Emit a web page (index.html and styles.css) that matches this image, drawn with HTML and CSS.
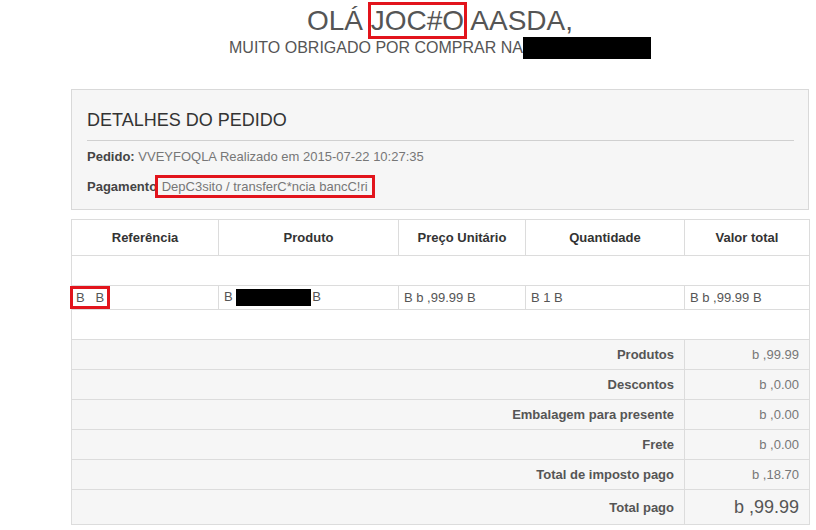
FILE: index.html
```html
<!DOCTYPE html>
<html lang="pt">
<head>
  <meta charset="UTF-8">
  <title>Pedido</title>
  <link rel="stylesheet" href="styles.css">
</head>
<body>
  <div class="page">
    <!-- Greeting -->
    <h1 class="hello">OLÁ <span class="mark">JOC#O</span> AASDA,</h1>
    <p class="thanks">MUITO OBRIGADO POR COMPRAR NA<span class="redact shop"></span></p>

    <!-- Order details -->
    <div class="details">
      <h3>DETALHES DO PEDIDO</h3>
      <p class="first"><b>Pedido:</b> VVEYFOQLA Realizado em 2015-07-22 10:27:35</p>
      <p><b>Pagamento</b> <span class="mark pay">DepC3sito / transferC*ncia bancC!ri</span></p>
    </div>

    <!-- Products -->
    <table class="order">
      <colgroup>
        <col style="width: 147px">
        <col style="width: 180px">
        <col style="width: 127px">
        <col style="width: 159px">
        <col style="width: 125px">
      </colgroup>
      <tr class="head">
        <th>Referência</th>
        <th>Produto</th>
        <th>Preço Unitário</th>
        <th>Quantidade</th>
        <th>Valor total</th>
      </tr>
      <tr class="blank"><td colspan="5"></td></tr>
      <tr class="item">
        <td><span class="mark ref">B&nbsp;&nbsp;&nbsp;B</span></td>
        <td>B <span class="redact prod"></span>B</td>
        <td>B b ,99.99 B</td>
        <td>B 1 B</td>
        <td>B b ,99.99 B</td>
      </tr>
      <tr class="blank"><td colspan="5"></td></tr>
      <tr class="sum"><td colspan="4">Produtos</td><td>b ,99.99</td></tr>
      <tr class="sum"><td colspan="4">Descontos</td><td>b ,0.00</td></tr>
      <tr class="sum"><td colspan="4">Embalagem para presente</td><td>b ,0.00</td></tr>
      <tr class="sum"><td colspan="4">Frete</td><td>b ,0.00</td></tr>
      <tr class="sum"><td colspan="4">Total de imposto pago</td><td>b ,18.70</td></tr>
      <tr class="sum total"><td colspan="4">Total pago</td><td>b ,99.99</td></tr>
    </table>
  </div>
</body>
</html>
```

FILE: styles.css
```css
body {
  margin: 0;
  background: #fff;
  font-family: "Liberation Sans", Arial, sans-serif;
  color: #555;
}

.page {
  width: 738px;
  margin-left: 71px;
}

.hello {
  margin: 5px 0 0;
  font-size: 28px;
  font-weight: normal;
  line-height: 31px;
  text-align: center;
  color: #555;
}

.thanks {
  margin: 1px 0 30px;
  font-size: 16px;
  line-height: 22px;
  text-align: center;
  color: #555;
}

.mark {
  outline: 3px solid #e2141c;
}

.redact {
  display: inline-block;
  background: #000;
}

.shop {
  width: 128px;
  height: 22px;
  vertical-align: bottom;
}

.details {
  background: #f6f6f6;
  border: 1px solid #d9d9d9;
  padding: 18px 14px 12px 15px;
}

.details h3 {
  margin: 0;
  font-size: 18px;
  font-weight: normal;
  line-height: 24px;
  color: #333;
  padding-bottom: 8px;
  border-bottom: 1px solid #d0d0d0;
}

.details p {
  margin: 10px 0 0;
  font-size: 13px;
  line-height: 20px;
  color: #777;
}

.details p.first {
  margin-top: 6px;
}

.details b {
  color: #444;
}

.pay {
  padding: 1px 4px;
  margin-left: -3px;
}

.order {
  width: 738px;
  margin-top: 9px;
  border-collapse: collapse;
  table-layout: fixed;
  font-size: 13px;
  border: 1px solid #dcdcdc;
}

.order th,
.order td {
  border: 1px solid #dcdcdc;
  padding: 0 6px;
}

.head th {
  height: 35px;
  font-weight: bold;
  color: #333;
  text-align: center;
}

.blank td {
  height: 29px;
  padding: 0;
}

.item td {
  height: 23px;
  color: #555;
  padding-left: 5px;
}

.ref {
  padding: 1px 3px;
  margin-left: -4px;
}

.prod {
  width: 75px;
  height: 17px;
  vertical-align: middle;
  margin-right: 1px;
}

.sum td {
  height: 29px;
  background: #f6f6f6;
  text-align: right;
  padding-right: 10px;
  color: #777;
}

.sum td:first-child {
  font-weight: bold;
  color: #555;
}

.total td {
  height: 34px;
}

.total td:last-child {
  font-size: 18px;
  color: #555;
}
```
